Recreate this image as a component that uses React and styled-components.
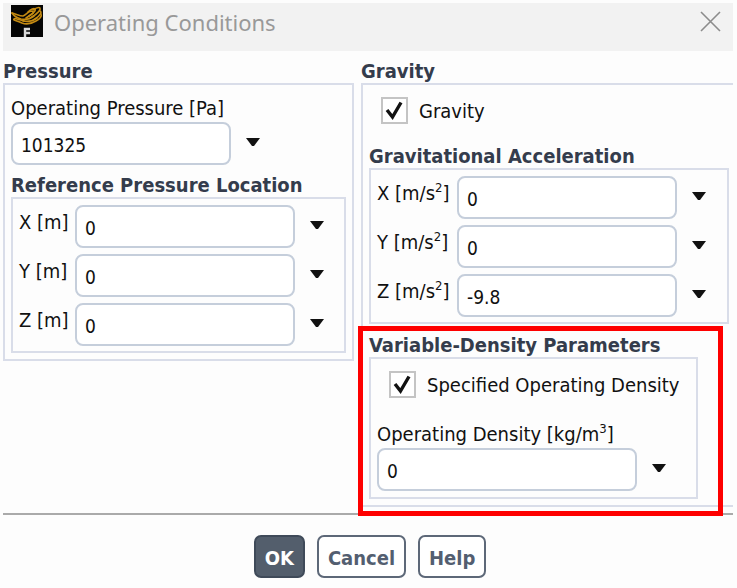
import { useState } from 'react'
import styled, { createGlobalStyle } from 'styled-components'

const GlobalStyle = createGlobalStyle`
  * {
    box-sizing: border-box;
  }
  body {
    margin: 0;
    background: #fdfdfd;
    color: #111;
    font-family: 'DejaVu Sans Condensed', 'DejaVu Sans', sans-serif;
    font-stretch: condensed;
    font-size: 20px;
    line-height: 24px;
  }
`

const Dialog = styled.main`
  padding: 3px 4px 10px 3px;
`

const TitleBar = styled.header`
  display: flex;
  align-items: flex-start;
  gap: 11px;
  height: 48px;
  padding: 2px 12px 0 8px;
  background: #f2f2f2;
`

const Title = styled.h1`
  flex: 1;
  margin: 0;
  padding-top: 2px;
  font-family: 'Noto Sans', 'Open Sans', sans-serif;
  font-stretch: normal;
  font-size: 22px;
  font-weight: 400;
  line-height: 30px;
  color: #999;
`

const CloseButton = styled.button`
  display: flex;
  padding: 6px 0;
  border: 0;
  background: none;
`

const Columns = styled.div`
  display: grid;
  grid-template-columns: minmax(0, 351fr) minmax(0, 372fr);
  gap: 7px;
  align-items: start;
  padding: 8px 0 6px;
`

const Section = styled.section`
  position: relative;
  margin-top: ${p => p.$top || 0}px;
  margin-right: ${p => p.$right || 0}px;
`

const Heading = styled.h2`
  margin: 0;
  font-size: 20px;
  font-weight: 700;
  line-height: 24px;
  white-space: nowrap;
  color: #343c4c;
`

const Frame = styled.div`
  padding: ${p => p.$pad};
  border: 2px solid #d9dde9;
  ${p => p.$open && 'border-right: 0;'}
`

const Rows = styled.div`
  display: flex;
  flex-direction: column;
  gap: 6px;
`

const Row = styled.div`
  display: flex;
  align-items: center;
`

const Label = styled.label`
  display: block;
  padding-bottom: 2px;
  white-space: nowrap;
`

const RowLabel = styled(Label)`
  flex: none;
  width: ${p => p.$width}px;
  padding-bottom: 10px;
`

const Sup = styled.sup`
  font-size: 13px;
  line-height: 0;
`

const Input = styled.input`
  flex: none;
  width: ${p => p.$width || 220}px;
  height: 43px;
  padding: 3px 8px 0;
  border: 2px solid #c5cedb;
  border-radius: 8px;
  background: #fff;
  color: #111;
  font: inherit;
  font-size: 19px;
`

const MenuButton = styled.button`
  display: flex;
  flex: none;
  padding: 0 15px 2px;
  border: 0;
  background: none;
`

const CheckLabel = styled.label`
  display: flex;
  align-items: center;
  gap: 11px;
  padding-left: 12px;
  white-space: nowrap;
`

const CheckBox = styled.input`
  appearance: none;
  width: 27px;
  height: 27px;
  margin: 0;
  border: 2px solid #c4c4c4;
  background: #fff;

  &:checked {
    background: #fff url("data:image/svg+xml,%3Csvg xmlns='http://www.w3.org/2000/svg' viewBox='0 0 23 23'%3E%3Cpath d='M4 11 9.5 18 18 3.5' fill='none' stroke='%23111' stroke-width='3.4'/%3E%3C/svg%3E") center / 23px 23px no-repeat;
  }
`

const Highlight = styled.div`
  position: absolute;
  inset: -7px -25px -17px -11px;
  border: 5px solid #fe0000;
  pointer-events: none;
`

const Footer = styled.footer`
  display: flex;
  justify-content: center;
  gap: 12px;
  padding: 20px 0 0 4px;
  border-top: 2px solid #aaa;
`

const Button = styled.button`
  height: 43px;
  padding: 2px 9px 0;
  border: 2px solid ${p => (p.$primary ? '#3f4a59' : '#5d6878')};
  border-radius: 7px;
  background: ${p => (p.$primary ? '#535e6c' : '#fff')};
  color: ${p => (p.$primary ? '#fff' : '#535e70')};
  font: inherit;
  font-weight: 700;
`

const Logo = () => (
  <svg width="32" height="32" viewBox="0 0 32 32" aria-hidden="true">
    <rect width="32" height="32" fill="#050505" />
    <g fill="none" stroke="#c48a12" strokeWidth="1.6" strokeLinecap="round" strokeLinejoin="round">
      <path d="M1 8c4 1 8 3 11 3 3-1 4-4 8-5 3 0 3 2 1 3l-6 4" />
      <path d="M17 7c3-3 6-4 7-3s-1 4-6 7" />
      <path d="M22 5c3-2 6-3 7-2 1 2-2 5-8 9" />
      <path d="M29 6c2 1 1 4-5 8" />
      <path d="M30 9c1 2-1 5-5 7-5 3-9 4-14 2-2-1-5-2-8-3-1-1 1-2 3-1l7 2" />
      <path d="M1 8c2 3 5 5 9 6 5 1 9 0 13-3" />
      <path d="M12 16c5 1 10 0 14-3" />
    </g>
    <path d="M14 32v-8h5M14 28h5" fill="none" stroke="#d8d8d8" strokeWidth="2.4" />
  </svg>
)

const Field = ({ id, name, value, width }) => {
  const [text, setText] = useState(value)

  return (
    <>
      <Input id={id} $width={width} value={text} onChange={e => setText(e.target.value)} />
      <MenuButton type="button" aria-label={`${name} options`}>
        <svg width="14" height="9" viewBox="0 0 14 9">
          <path d="M0 0h14L8 8H6z" fill="#111" />
        </svg>
      </MenuButton>
    </>
  )
}

const VectorRows = ({ prefix, values, unit, labelWidth }) => (
  <Rows>
    {['X', 'Y', 'Z'].map((axis, i) => (
      <Row key={axis}>
        <RowLabel htmlFor={prefix + axis} $width={labelWidth}>{axis} [{unit}]</RowLabel>
        <Field id={prefix + axis} name={axis} value={values[i]} />
      </Row>
    ))}
  </Rows>
)

const App = () => {
  const [gravity, setGravity] = useState(true)
  const [density, setDensity] = useState(true)

  return (
    <Dialog>
      <GlobalStyle />
      <TitleBar>
        <Logo />
        <Title>Operating Conditions</Title>
        <CloseButton type="button" aria-label="Close">
          <svg width="21" height="21" viewBox="0 0 21 21">
            <path d="M1 1l19 19M20 1L1 20" stroke="#8c8c8c" strokeWidth="1.6" />
          </svg>
        </CloseButton>
      </TitleBar>

      <Columns>
        <Section>
          <Heading>Pressure</Heading>
          <Frame $pad="11px 6px 6px">
            <Label htmlFor="pressure">Operating Pressure [Pa]</Label>
            <Row>
              <Field id="pressure" name="Operating pressure" value="101325" />
            </Row>
            <Section $top={8}>
              <Heading>Reference Pressure Location</Heading>
              <Frame $pad="6px 6px 5px">
                <VectorRows prefix="ref" unit="m" values={['0', '0', '0']} labelWidth={56} />
              </Frame>
            </Section>
          </Frame>
        </Section>

        <Section>
          <Heading>Gravity</Heading>
          <Frame $pad="12px 4px 6px 6px" $open>
            <CheckLabel>
              <CheckBox type="checkbox" checked={gravity} onChange={e => setGravity(e.target.checked)} />
              Gravity
            </CheckLabel>
            <Section $top={20}>
              <Heading>Gravitational Acceleration</Heading>
              <Frame $pad="6px 6px 5px">
                <VectorRows prefix="acc" unit={<>m/s<Sup>2</Sup></>} values={['0', '0', '-9.8']} labelWidth={80} />
              </Frame>
            </Section>
            <Section $top={9} $right={31}>
              <Heading>Variable-Density Parameters</Heading>
              <Frame $pad="12px 6px 6px">
                <CheckLabel>
                  <CheckBox type="checkbox" checked={density} onChange={e => setDensity(e.target.checked)} />
                  Specified Operating Density
                </CheckLabel>
                <Section $top={24}>
                  <Label htmlFor="density">Operating Density [kg/m<Sup>3</Sup>]</Label>
                  <Row>
                    <Field id="density" name="Operating density" value="0" width={260} />
                  </Row>
                </Section>
              </Frame>
              <Highlight />
            </Section>
          </Frame>
        </Section>
      </Columns>

      <Footer>
        <Button type="button" $primary>OK</Button>
        <Button type="button">Cancel</Button>
        <Button type="button">Help</Button>
      </Footer>
    </Dialog>
  )
}

export default App
